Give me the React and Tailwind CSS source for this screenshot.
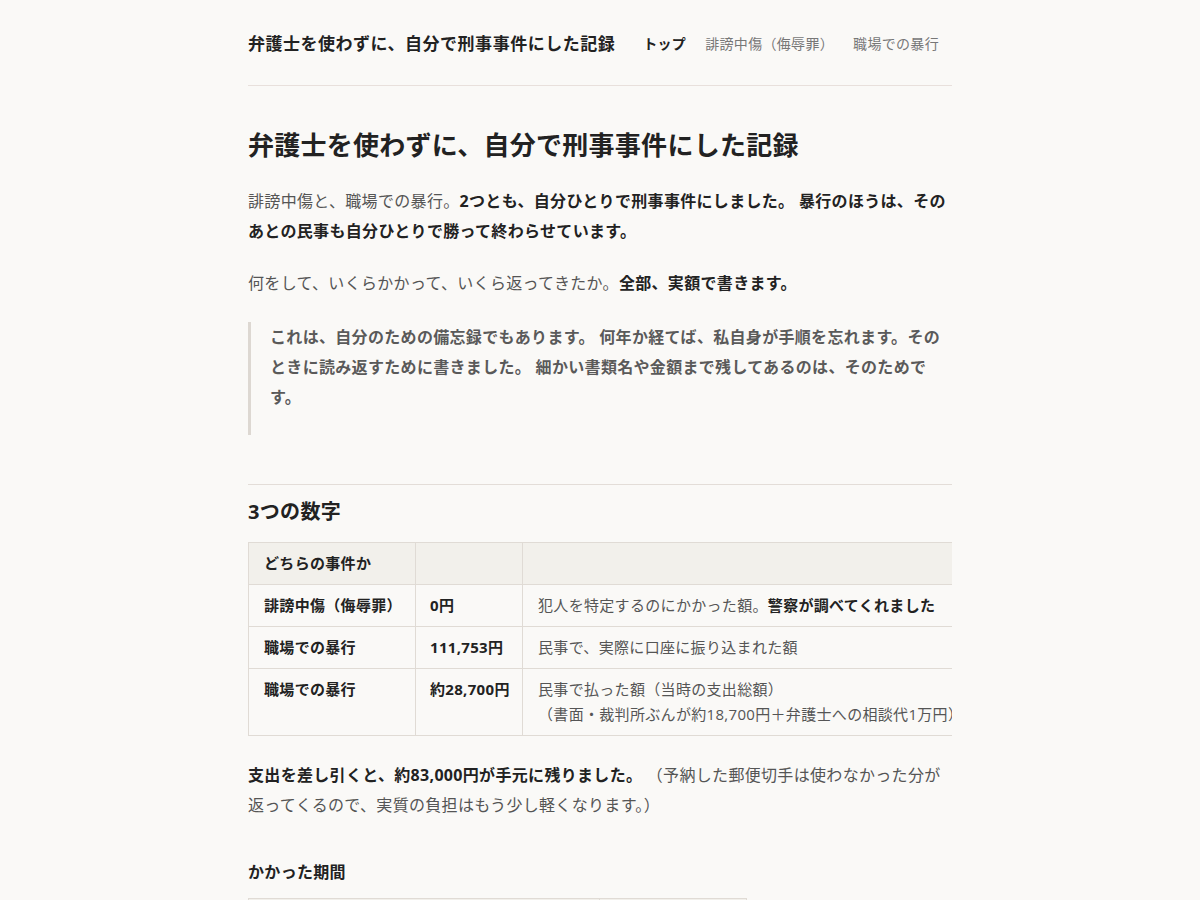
import React from 'react';

const rows = [
  {
    kind: '誹謗中傷（侮辱罪）',
    amount: '0円',
    note: (
      <>
        犯人を特定するのにかかった額。<strong className="font-bold text-[#222]">警察が調べてくれました</strong>
      </>
    ),
  },
  { kind: '職場での暴行', amount: '111,753円', note: '民事で、実際に口座に振り込まれた額' },
  {
    kind: '職場での暴行',
    amount: '約28,700円',
    note: (
      <>
        民事で払った額（当時の支出総額）
        <br />
        （書面・裁判所ぶんが約18,700円＋弁護士への相談代1万円）
      </>
    ),
  },
];

export default function App() {
  return (
    <div className="min-h-screen bg-[#faf9f7] font-['Open_Sans','Noto_Sans_CJK_JP',sans-serif] text-[#555] tracking-[0.02em]">
      <div className="mx-auto w-[704px]">
        {/* Header */}
        <header className="flex items-center border-b border-[#e8e0dc] pt-[31px] pb-[28px]">
          <a className="text-[17px] leading-[26px] font-bold text-[#222] tracking-[0.03em]">弁護士を使わずに、自分で刑事事件にした記録</a>
          <nav className="ml-[28px] flex items-center gap-[19px] text-[14px] leading-[26px]">
            <a className="font-bold text-[#222]">トップ</a>
            <a className="text-[#777]">誹謗中傷（侮辱罪）</a>
            <a className="text-[#777]">職場での暴行</a>
          </nav>
        </header>

        <main>
          <h1 className="mt-[39px] text-[26px] leading-[40px] font-bold text-[#222] tracking-[0.01em]">
            弁護士を使わずに、自分で刑事事件にした記録
          </h1>

          <p className="mt-[21px] text-[16px] leading-[30px]">
            誹謗中傷と、職場での暴行。
            <strong className="font-bold text-[#222]">2つとも、自分ひとりで刑事事件にしました。 暴行のほうは、そのあとの民事も自分ひとりで勝って終わらせています。</strong>
          </p>

          <p className="mt-[22px] text-[16px] leading-[30px]">
            何をして、いくらかかって、いくら返ってきたか。<strong className="font-bold text-[#222]">全部、実額で書きます。</strong>
          </p>

          <blockquote className="mt-[24px] border-l-[3px] border-[#ddd8d2] pl-[19px] pb-[23px]">
            <p className="text-[16px] leading-[30px] font-semibold text-[#5a5a5a]">
              これは、自分のための備忘録でもあります。 何年か経てば、私自身が手順を忘れます。そのときに読み返すために書きました。 細かい書類名や金額まで残してあるのは、そのためです。
            </p>
          </blockquote>

          <hr className="mt-[49px] border-t border-[#e3ddd8]" />

          <h2 className="mt-[13px] text-[20px] leading-[28px] font-bold text-[#222]">3つの数字</h2>

          <div className="mt-[16px] overflow-hidden">
            <table className="w-[744px] max-w-none table-fixed border-collapse text-[15px] leading-[25px] whitespace-nowrap">
              <colgroup>
                <col className="w-[167px]" />
                <col className="w-[107px]" />
                <col className="w-[470px]" />
              </colgroup>
              <thead>
                <tr className="bg-[#f2f0eb]">
                  <th className="border border-[#e0dbd5] px-[15px] py-[8px] text-left font-bold text-[#222]">どちらの事件か</th>
                  <th className="border border-[#e0dbd5] px-[14px] py-[8px] text-left font-bold text-[#222]"></th>
                  <th className="border border-[#e0dbd5] px-[15px] py-[8px] text-left font-bold text-[#222]"></th>
                </tr>
              </thead>
              <tbody>
                {rows.map((r, i) => (
                  <tr key={i} className="align-top">
                    <td className="border border-[#e0dbd5] pl-[15px] pr-0 py-[8px] font-bold text-[#222]">{r.kind}</td>
                    <td className="border border-[#e0dbd5] pl-[14px] pr-0 py-[8px] font-bold text-[#222]">{r.amount}</td>
                    <td className="border border-[#e0dbd5] px-[15px] py-[8px]">{r.note}</td>
                  </tr>
                ))}
              </tbody>
            </table>
          </div>

          <p className="mt-[24px] text-[16px] leading-[30px]">
            <strong className="font-bold text-[#222]">支出を差し引くと、約83,000円が手元に残りました。</strong> （予納した郵便切手は使わなかった分が返ってくるので、実質の負担はもう少し軽くなります。）
          </p>

          <h3 className="mt-[40px] text-[16px] leading-[24px] font-bold text-[#222]">かかった期間</h3>

          <table className="mt-[14px] w-[499px] border-collapse text-[15px] leading-[25px]">
            <thead>
              <tr className="bg-[#f2f0eb]">
                <th className="border border-[#e0dbd5] px-[15px] py-[8px] text-left font-bold text-[#222]">事件</th>
                <th className="border border-[#e0dbd5] px-[15px] py-[8px] text-left font-bold text-[#222]">期間</th>
              </tr>
            </thead>
            <tbody>
              <tr>
                <td className="border border-[#e0dbd5] px-[15px] py-[8px] font-bold text-[#222]">誹謗中傷（侮辱罪）</td>
                <td className="border border-[#e0dbd5] px-[15px] py-[8px]">約1年</td>
              </tr>
            </tbody>
          </table>
          <div className="h-[60px]" />
        </main>
      </div>
    </div>
  );
}
